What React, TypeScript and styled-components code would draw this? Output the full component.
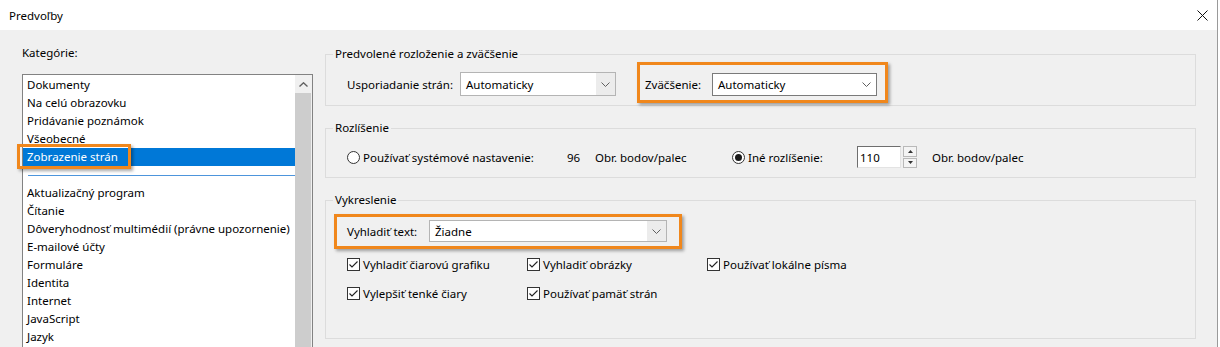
import styled, { createGlobalStyle } from "styled-components";

const GlobalStyle = createGlobalStyle`
    html, body {
        margin: 0;
        padding: 0;
        background: #ffffff;
    }
    body {
        font-family: "Segoe UI", "Noto Sans", sans-serif;
        font-size: 11.5px;
        color: #000000;
    }
`

const Dialog = styled.div`
    width: 1217px;
    height: 347px;
    border-right: 1px solid #9a9a9a;
    background: #f0f0f0;
    display: flex;
    flex-direction: column;
    overflow: hidden;
`

const TitleBar = styled.div`
    flex-shrink: 0;
    height: 30px;
    background: #ffffff;
    display: flex;
    align-items: center;
    justify-content: space-between;
    padding: 0 9px 0 9px;
`

const CloseBtn = styled.div`
    display: flex;
    width: 11px;
    height: 11px;
`

const Body = styled.div`
    flex: 1;
    display: flex;
    align-items: flex-start;
`

const LeftPanel = styled.div`
    width: 291px;
    padding: 15px 0 0 22px;
    display: flex;
    flex-direction: column;
`

const Caption = styled.div`
    line-height: 16px;
    height: 16px;
    margin-bottom: 13px;
`

const ListBox = styled.div`
    height: 300px;
    border: 1px solid #828282;
    background: #ffffff;
    display: flex;
`

const Items = styled.div`
    flex: 1;
    padding-top: 1px;
`

const Item = styled.div<{ $selected?: boolean }>`
    height: 18px;
    line-height: 18px;
    padding-left: 4px;
    white-space: nowrap;
    background: ${p => p.$selected ? "#0078d7" : "transparent"};
    color: ${p => p.$selected ? "#ffffff" : "#000000"};
`

const Separator = styled.div`
    height: 18px;
    display: flex;
    align-items: center;
    padding-left: 5px;

    &::before {
        content: "";
        flex: 1;
        height: 1px;
        background: #4d95dc;
    }
`

const ScrollBar = styled.div`
    width: 17px;
    background: #f0f0f0;
    display: flex;
    flex-direction: column;
`

const ScrollArrow = styled.div`
    height: 18px;
    display: flex;
    align-items: center;
    justify-content: center;
`

const ScrollThumb = styled.div`
    flex: 1;
    margin-right: 1px;
    background: #cdcdcd;
`

// orange annotation frame drawn over a control
const Marked = styled.div<{ $inset: string; $inline?: boolean }>`
    position: relative;
    display: ${p => p.$inline ? "inline-flex" : "flex"};
    align-items: center;

    &::after {
        content: "";
        position: absolute;
        inset: ${p => p.$inset};
        border: 3px solid #f0871c;
        box-shadow: 2px 2px 3px rgba(0, 0, 0, 0.35);
        pointer-events: none;
    }
`

const RightPanel = styled.div`
    flex: 1;
    padding: 16px 21px 0 12px;
    display: flex;
    flex-direction: column;
    gap: 14px;
`

const Group = styled.fieldset`
    margin: 0;
    padding: 0;
    min-width: 0;
    border: 1px solid #dcdcdc;
`

const Legend = styled.legend`
    margin-left: 7px;
    padding: 0 2px;
    height: 16px;
    line-height: 16px;
`

const GroupBody = styled.div<{ $top: number; $bottom: number }>`
    padding: ${p => p.$top}px 21px ${p => p.$bottom}px 21px;
`

const Row = styled.div`
    display: flex;
    align-items: center;
`

const Label = styled.div<{ $w?: number; $ml?: number }>`
    width: ${p => p.$w ? `${p.$w}px` : "auto"};
    margin-left: ${p => p.$ml || 0}px;
    white-space: nowrap;
    flex-shrink: 0;
`

const Combo = styled.div<{ $w: number; $h: number; $focus?: boolean }>`
    box-sizing: border-box;
    width: ${p => p.$w}px;
    height: ${p => p.$h}px;
    border: 1px solid ${p => p.$focus ? "#7a7a7a" : "#b4b4b4"};
    background: ${p => p.$focus ? "#ffffff" : "#ececec"};
    display: flex;
    align-items: stretch;
    flex-shrink: 0;
`

const ComboText = styled.div`
    flex: 1;
    background: #ffffff;
    padding-left: 5px;
    display: flex;
    align-items: center;
`

const ComboArrow = styled.div`
    width: 19px;
    display: flex;
    align-items: center;
    justify-content: center;
`

const Radio = styled.div<{ $checked?: boolean }>`
    box-sizing: border-box;
    width: 13px;
    height: 13px;
    border-radius: 50%;
    border: 1px solid #333333;
    background: #ffffff;
    display: flex;
    align-items: center;
    justify-content: center;
    flex-shrink: 0;
    margin-right: 3px;

    &::after {
        content: "";
        width: 7px;
        height: 7px;
        border-radius: 50%;
        background: ${p => p.$checked ? "#1a1a1a" : "transparent"};
    }
`

const Spin = styled.div`
    display: flex;
    gap: 2px;
    flex-shrink: 0;
`

const SpinInput = styled.div`
    box-sizing: border-box;
    width: 44px;
    height: 22px;
    background: #ffffff;
    border-top: 1px solid #6e6e6e;
    border-left: 1px solid #6e6e6e;
    border-right: 1px solid #e3e3e3;
    border-bottom: 1px solid #e3e3e3;
    padding-left: 2px;
    display: flex;
    align-items: center;
`

const SpinButtons = styled.div`
    width: 14px;
    height: 22px;
    display: flex;
    flex-direction: column;
    gap: 1px;
`

const SpinBtn = styled.div`
    flex: 1;
    box-sizing: border-box;
    border: 1px solid #b9b9b9;
    background: #f4f4f4;
    display: flex;
    align-items: center;
    justify-content: center;
`

const CheckGrid = styled.div`
    display: grid;
    grid-template-columns: 180px 180px auto;
    row-gap: 11px;
    margin-top: 13px;
`

const CheckItem = styled.div`
    display: flex;
    align-items: center;
    height: 18px;
    white-space: nowrap;
`

const Box = styled.div`
    box-sizing: border-box;
    width: 13px;
    height: 13px;
    border: 1px solid #333333;
    background: #ffffff;
    margin-right: 3px;
    display: flex;
    flex-shrink: 0;
`

const Chevron = () => (
    <svg width="9" height="5" viewBox="0 0 9 5">
        <path d="M0.5 0.5 L4.5 4.5 L8.5 0.5" fill="none" stroke="#606060" strokeWidth="1" />
    </svg>
)

const Check = ({ label }: { label: string }) => (
    <CheckItem>
        <Box>
            <svg width="11" height="11" viewBox="0 0 11 11">
                <path d="M1.5 5.5 L4 8 L9.5 2.5" fill="none" stroke="#222" strokeWidth="1.1" />
            </svg>
        </Box>
        {label}
    </CheckItem>
)

type ComboProps = { value: string, w: number, h: number, focus?: boolean }

const Select = ({ value, w, h, focus }: ComboProps) => (
    <Combo $w={w} $h={h} $focus={focus}>
        <ComboText>{value}</ComboText>
        <ComboArrow><Chevron /></ComboArrow>
    </Combo>
)

const topItems = ["Dokumenty", "Na celú obrazovku", "Pridávanie poznámok", "Všeobecné"]
const restItems = [
    "Aktualizačný program",
    "Čítanie",
    "Dôveryhodnosť multimédií (právne upozornenie)",
    "E-mailové účty",
    "Formuláre",
    "Identita",
    "Internet",
    "JavaScript",
    "Jazyk",
]

export default function App() {
    return (
        <>
            <GlobalStyle />
            <Dialog>
                <TitleBar>
                    <span>Predvoľby</span>
                    <CloseBtn>
                        <svg width="11" height="11" viewBox="0 0 11 11">
                            <path d="M0.5 0.5 L10.5 10.5 M10.5 0.5 L0.5 10.5" stroke="#111" strokeWidth="1" />
                        </svg>
                    </CloseBtn>
                </TitleBar>
                <Body>
                    <LeftPanel>
                        <Caption>Kategórie:</Caption>
                        <ListBox>
                            <Items>
                                {topItems.map(t => <Item key={t}>{t}</Item>)}
                                <Item $selected>
                                    <Marked $inset="-4px -13px -3px -10px" $inline>
                                        Zobrazenie strán
                                    </Marked>
                                </Item>
                                <Separator />
                                {restItems.map(t => <Item key={t}>{t}</Item>)}
                            </Items>
                            <ScrollBar>
                                <ScrollArrow>
                                    <svg width="9" height="5" viewBox="0 0 9 5">
                                        <path d="M0.5 4.5 L4.5 0.8 L8.5 4.5" fill="none" stroke="#606060" strokeWidth="1.4" />
                                    </svg>
                                </ScrollArrow>
                                <ScrollThumb />
                            </ScrollBar>
                        </ListBox>
                    </LeftPanel>

                    <RightPanel>
                        <Group>
                            <Legend>Predvolené rozloženie a zväčšenie</Legend>
                            <GroupBody $top={10} $bottom={9}>
                                <Row>
                                    <Label $w={113}>Usporiadanie strán:</Label>
                                    <Select value="Automaticky" w={156} h={24} />
                                    <Marked $inset="-11px -11px -7px -8px" style={{ marginLeft: 29 }}>
                                        <Label $w={67}>Zväčšenie:</Label>
                                        <Select value="Automaticky" w={165} h={23} focus />
                                    </Marked>
                                </Row>
                            </GroupBody>
                        </Group>

                        <Group>
                            <Legend>Rozlíšenie</Legend>
                            <GroupBody $top={10} $bottom={9}>
                                <Row>
                                    <Radio />
                                    <Label $w={204}>Používať systémové nastavenie:</Label>
                                    <Label $w={28}>96</Label>
                                    <Label $w={137}>Obr. bodov/palec</Label>
                                    <Radio $checked />
                                    <Label $w={109}>Iné rozlíšenie:</Label>
                                    <Spin>
                                        <SpinInput>110</SpinInput>
                                        <SpinButtons>
                                            <SpinBtn>
                                                <svg width="5" height="3" viewBox="0 0 5 3"><path d="M0 3 L2.5 0 L5 3 Z" fill="#333" /></svg>
                                            </SpinBtn>
                                            <SpinBtn>
                                                <svg width="5" height="3" viewBox="0 0 5 3"><path d="M0 0 L2.5 3 L5 0 Z" fill="#333" /></svg>
                                            </SpinBtn>
                                        </SpinButtons>
                                    </Spin>
                                    <Label $ml={15}>Obr. bodov/palec</Label>
                                </Row>
                            </GroupBody>
                        </Group>

                        <Group>
                            <Legend>Vykreslenie</Legend>
                            <GroupBody $top={12} $bottom={36}>
                                <Row>
                                    <Marked $inset="-6px -15px -7px -13px">
                                        <Label $w={82}>Vyhladiť text:</Label>
                                        <Select value="Žiadne" w={238} h={22} />
                                    </Marked>
                                </Row>
                                <CheckGrid>
                                    <Check label="Vyhladiť čiarovú grafiku" />
                                    <Check label="Vyhladiť obrázky" />
                                    <Check label="Používať lokálne písma" />
                                    <Check label="Vylepšiť tenké čiary" />
                                    <Check label="Používať pamäť strán" />
                                </CheckGrid>
                            </GroupBody>
                        </Group>
                    </RightPanel>
                </Body>
            </Dialog>
        </>
    )
}
